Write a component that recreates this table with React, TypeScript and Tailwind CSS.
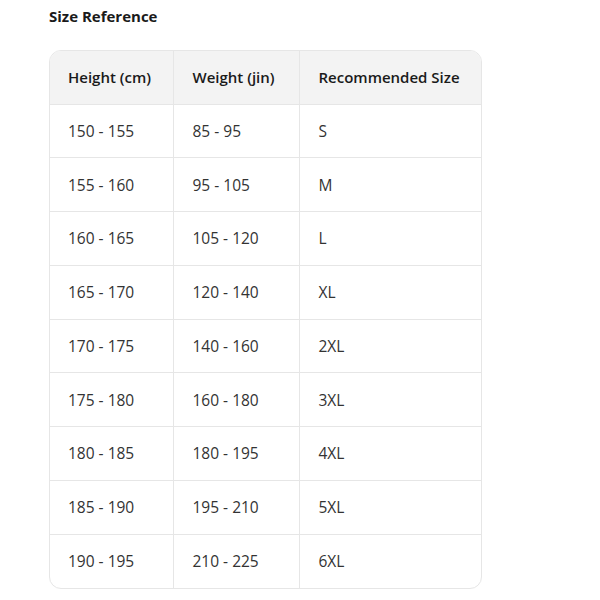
import React from "react";

const rows = [
  ["150 - 155", "85 - 95", "S"],
  ["155 - 160", "95 - 105", "M"],
  ["160 - 165", "105 - 120", "L"],
  ["165 - 170", "120 - 140", "XL"],
  ["170 - 175", "140 - 160", "2XL"],
  ["175 - 180", "160 - 180", "3XL"],
  ["180 - 185", "180 - 195", "4XL"],
  ["185 - 190", "195 - 210", "5XL"],
  ["190 - 195", "210 - 225", "6XL"],
];

export default function App() {
  return (
    <div className="w-[600px] h-[600px] bg-white pl-[49px] pt-[6px]" style={{ fontFamily: '"Open Sans", "Noto Sans", sans-serif' }}>
      <div className="text-[15px] font-bold text-[#1a1a1a] h-[20px] leading-[20px]">Size Reference</div>
      <div className="mt-[24px] w-[433px] border border-[#e6e6e6] rounded-[12px] overflow-hidden">
        <table className="w-full border-collapse text-[15px]">
          <thead>
            <tr className="bg-[#f3f3f3] h-[53px]">
              <th className="w-[123px] text-left font-semibold text-[#1a1a1a] pl-[18px] border-r border-b border-[#e6e6e6]">Height (cm)</th>
              <th className="w-[126px] text-left font-semibold text-[#1a1a1a] pl-[19px] border-r border-b border-[#e6e6e6]">Weight (jin)</th>
              <th className="text-left font-semibold text-[#1a1a1a] pl-[19px] border-b border-[#e6e6e6]">Recommended Size</th>
            </tr>
          </thead>
          <tbody className="text-[15.5px]">
            {rows.map((r, i) => (
              <tr key={i} className="h-[53.75px] text-[#333]">
                <td className={`pl-[18px] pt-[1px] border-r border-[#e6e6e6] ${i < rows.length - 1 ? "border-b" : ""}`}>{r[0]}</td>
                <td className={`pl-[19px] pt-[1px] border-r border-[#e6e6e6] ${i < rows.length - 1 ? "border-b" : ""}`}>{r[1]}</td>
                <td className={`pl-[19px] pt-[1px] border-[#e6e6e6] ${i < rows.length - 1 ? "border-b" : ""}`}>{r[2]}</td>
              </tr>
            ))}
          </tbody>
        </table>
      </div>
    </div>
  );
}
